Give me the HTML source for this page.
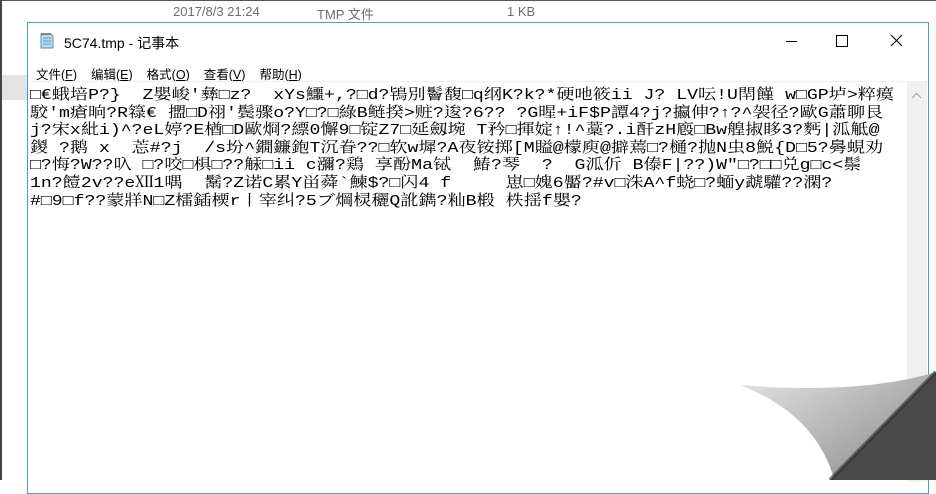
<!DOCTYPE html>
<html><head><meta charset="utf-8"><style>
body{margin:0;width:936px;height:480px;overflow:hidden;background:#fff;position:relative;font-family:"Liberation Sans","Noto Sans CJK SC",sans-serif}
.abs{position:absolute}
.txt div{white-space:pre;height:17.6px;line-height:17.6px;transform:scaleX(1.21);transform-origin:0 0;width:max-content}
</style></head><body>
<div class="abs" style="left:0;top:0;width:936px;height:1px;background:#555"></div>
<div class="abs" style="left:0;top:0;width:2px;height:480px;background:#444"></div>
<div class="abs" style="left:2px;top:75px;width:26px;height:25px;background:#e3e3e3"></div>
<div class="abs" style="left:173px;top:4px;font-size:13px;color:#6d6d6d">2017/8/3 21:24</div>
<div class="abs" style="left:317px;top:4px;font-size:13px;color:#6d6d6d">TMP 文件</div>
<div class="abs" style="left:507px;top:4px;font-size:13px;color:#6d6d6d">1 KB</div>
<div class="abs" style="left:27px;top:22px;width:900px;height:470px;border:1px solid #4a9ae0;background:#fff"></div>
<svg class="abs" style="left:38px;top:31px" width="18" height="18" viewBox="0 0 18 18"><path d="M3 3h10l2 2v12H3z" fill="#b8d8ef" stroke="#5e8fb5"/><path d="M5 7h8M5 10h8M5 13h8" stroke="#6c9cc4"/><path d="M4 2v2M6 2v2M8 2v2M10 2v2M12 2v2" stroke="#555"/></svg>
<div class="abs" style="left:64px;top:33px;font-size:14px;color:#000">5C74.tmp - 记事本</div>
<div class="abs" style="left:786px;top:41px;width:11px;height:1px;background:#000"></div>
<div class="abs" style="left:836px;top:35px;width:10px;height:10px;border:1px solid #000"></div>
<svg class="abs" style="left:890px;top:34px" width="13" height="13"><path d="M1 1L12 12M12 1L1 12" stroke="#000" stroke-width="1.1"/></svg>
<div class="abs" style="left:36px;top:64px;font-size:12.5px;color:#000">
<span style="margin-right:14px">文件(<u>F</u>)</span><span style="margin-right:14px">编辑(<u>E</u>)</span><span style="margin-right:14px">格式(<u>O</u>)</span><span style="margin-right:14px">查看(<u>V</u>)</span><span>帮助(<u>H</u>)</span></div>
<div class="abs" style="left:28px;top:81px;width:900px;height:1px;background:#f0f0f0"></div>
<div class="abs" style="left:907px;top:82px;width:20px;height:400px;background:#f0f0f0"></div>
<svg class="abs" style="left:911px;top:92px" width="11" height="7"><path d="M1 6L5.5 1.5L10 6" stroke="#a0a0a0" fill="none"/></svg>
<div class="abs txt" style="left:30px;top:87px;font-family:'Liberation Mono','Noto Serif CJK SC',monospace;font-size:15px;color:#000">
<div>□€蛾培P?}  Z嬰峻'彝□z?  xYs鱷+,?□d?鴇別鬠馥□q纲K?k?*硬吔筱ii J? LV呍!U閈饉 w□GP垆>粹瘼</div>
<div>駮'm瘡晌?R簶€ 擝□D祤'鬓骤o?Y□?□綠B鲢揆>赃?逡?6?? ?G暒+iF$P譚4?j?攍伸?↑?^袈径?歐G蕭聊艮</div>
<div>j?宋x紕i)^?eL婷?E楢□D歐烱?縹0懈9□锭Z7□延劔埦 T矜□揮婝↑!^藁?.i酐zH廏□Bw艎掓眵3?麫|泒觝@</div>
<div>鍐 ?鹅 x  莣#?j  /s坋^鐗鐮鉋T沉眷??□软w墀?A夜铵掷[M賹@檬庾@擗蔫□?樋?抛N虫8鮵{D□5?臱蜆劝</div>
<div>□?悔?W??叺 □?咬□椇□??觨□ii c瀰?鶏 享酚Ma铽  鰆?琴  ?  G泒伒 B傣F|??)W"□?□□兑g□c<鬃</div>
<div>1n?饐2v??eⅫ1喁  鬗?Z诺C累Y畄蕣`鰊$?□闪4 f     崽□媿6靨?#v□洙A^f蛲□?蝒y虣驩??澖?</div>
<div>#□9□f??蒙牂N□Z檑鍤樮r丨宰纠?5ブ焵棂穲Q訛鐫?籼B椴 柣揺f嬰?</div>
</div>
<svg class="abs" style="left:700px;top:360px" width="236" height="120" viewBox="700 360 236 120">
<defs><linearGradient id="g" x1="0" y1="0" x2="1" y2="1"><stop offset="0" stop-color="#e6e6e6"/><stop offset="1" stop-color="#7a7a7a"/></linearGradient></defs>
<path d="M839 505Q830 420 740 385Q860 395 936 372L936 480Z" fill="url(#g)"/>
<path d="M936 372L830 480H936Z" fill="#4a4a4a"/>
<path d="M936 372L830 480" stroke="#2a2a2a" stroke-width="4" opacity="0.6"/>
</svg>
</body></html>
